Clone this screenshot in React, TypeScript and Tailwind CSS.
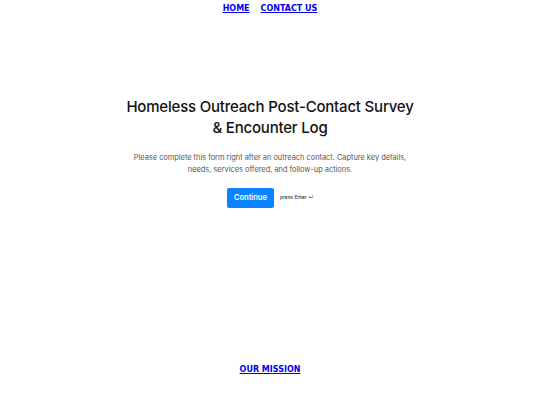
import React from 'react';

export default function App() {
  return (
    <div className="flex h-[405px] w-full flex-col items-center bg-white">
      {/* top nav */}
      <nav className="flex gap-[11px] pt-[3px] font-['DejaVu_Sans',sans-serif] text-[8px] font-bold leading-[11px]">
        <a href="#" className="text-[#0000ee] underline">HOME</a>
        <a href="#" className="text-[#0000ee] underline">CONTACT US</a>
      </nav>

      {/* intro */}
      <main className="flex flex-1 flex-col items-center pt-[82px] font-['Inter',sans-serif]">
        <h1 className="w-[300px] text-center text-[15px] font-medium leading-[21px] tracking-[-0.2px] text-[#111]">
          Homeless Outreach Post-Contact Survey &amp; Encounter Log
        </h1>
        <p className="mt-[14px] w-[290px] text-center text-[7.4px] leading-[12px] text-[#555]">
          Please complete this form right after an outreach contact. Capture key details, needs, services offered, and follow-up actions.
        </p>
        <div className="mt-[12px] flex items-center gap-[6px]">
          <button className="h-[20px] w-[47px] rounded-[2px] bg-[#0a84ff] text-[7.5px] font-semibold text-white">
            Continue
          </button>
          <span className="text-[5px] text-[#222]">press Enter ↵</span>
        </div>
      </main>

      {/* footer */}
      <footer className="pb-[30px] font-['DejaVu_Sans',sans-serif] text-[8px] font-bold leading-[11px]">
        <a href="#" className="text-[#0000ee] underline">OUR MISSION</a>
      </footer>
    </div>
  );
}
